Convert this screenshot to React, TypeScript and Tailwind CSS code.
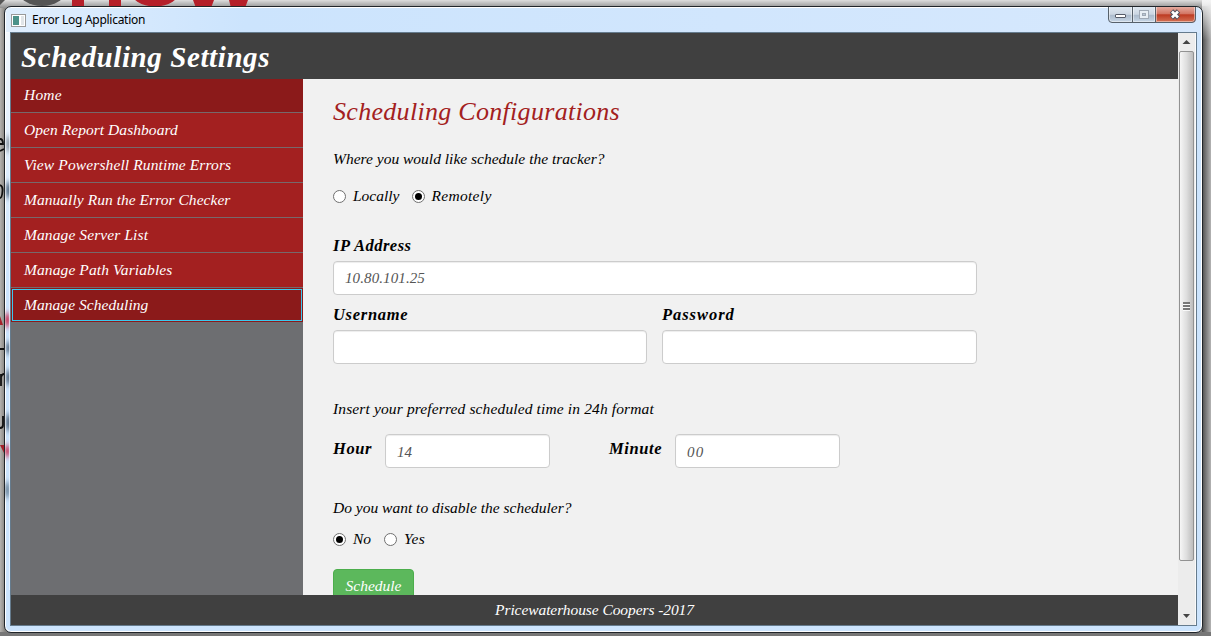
import React from "react";

const NAV: { text: string; tracking: string }[] = [
  { text: "Home", tracking: "tracking-[0.2px]" },
  { text: "Open Report Dashboard", tracking: "tracking-[0.05px]" },
  { text: "View Powershell Runtime Errors", tracking: "tracking-[0.12px]" },
  { text: "Manually Run the Error Checker", tracking: "tracking-[0.04px]" },
  { text: "Manage Server List", tracking: "tracking-[0.1px]" },
  { text: "Manage Path Variables", tracking: "tracking-[0.1px]" },
  { text: "Manage Scheduling", tracking: "tracking-[0.05px]" },
];

function Radio({ label, on = false, tracking = "" }: { label: string; on?: boolean; tracking?: string }) {
  return (
    <label className="flex h-5 items-center">
      <span className="flex size-[13px] shrink-0 items-center justify-center rounded-full border border-[#707070] bg-white">
        {on && <span className="size-[7px] rounded-full bg-black" />}
      </span>
      <span className={"ml-[7px] whitespace-nowrap " + tracking}>{label}</span>
    </label>
  );
}

function Field({ value = "", className = "" }: { value?: string; className?: string }) {
  return (
    <div className={"flex h-[34px] items-center rounded border border-[#ccc] bg-white pl-[11px] text-[15px] text-[#555] shadow-[inset_0_1px_1px_rgba(0,0,0,0.075)] " + className}>
      {value}
    </div>
  );
}

function Backdrop() {
  return (
    <svg className="absolute inset-0" width="1211" height="636" viewBox="0 0 1211 636">
      <defs>
        <linearGradient id="rightShade">
          <stop offset="0" stopColor="#4c4c4c" />
          <stop offset="1" stopColor="#b4b4b4" />
        </linearGradient>
        <linearGradient id="topShade" x2="0" y2="1">
          <stop offset="0" stopColor="#dedede" />
          <stop offset="1" stopColor="#8e8e8e" />
        </linearGradient>
        <linearGradient id="cornerShade" x2="0" y2="1">
          <stop offset="0" stopColor="#f4f4f4" />
          <stop offset="1" stopColor="#f4f4f4" stopOpacity="0" />
        </linearGradient>
        <linearGradient id="leftShade" gradientUnits="userSpaceOnUse" x1="0" x2="5" y1="0" y2="0">
          <stop offset="0" stopColor="#b5b3b0" />
          <stop offset="1" stopColor="#85837f" />
        </linearGradient>
      </defs>
      <rect width="1211" height="636" fill="url(#leftShade)" />
      <rect width="1211" height="8" fill="url(#topShade)" />
      <rect x="1202" y="6" width="9" height="630" fill="url(#rightShade)" />
      <rect x="1202" width="9" height="40" fill="url(#cornerShade)" />
      <rect y="632" width="1211" height="4" fill="#777" />
      <path d="M0 0h5L0 5z" fill="#555" />
      <ellipse cx="42" cy="-10" rx="24" ry="16" fill="#555" />
      <path d="M72 0h12v8h-12zM109 0h12v8h-12z" fill="#b5202a" />
      <ellipse cx="155" cy="-10" rx="25" ry="16.500" fill="#b5202a" />
      <path d="M193 0h21l-3 8h-15zM229 0h19l-3 8h-14z" fill="#b5202a" />
      <g fill="none" stroke="#111" strokeWidth="1.800">
        <path d="M0 139Q3 139 3 144H0M0 151L4 149" />
        <path d="M0 185Q3 186 2.500 191Q2 198 0 198" />
        <path d="M0 349H4M1 374V386M1 377Q2 374 4 374M0 428Q3 428 3 425V416" />
      </g>
      <path d="M0 316l3 9H0zM0 445h4v8z" fill="#a4202a" />
    </svg>
  );
}

function FrameReflections() {
  return (
    <svg className="absolute top-[30px] left-[5px]" width="5" height="560" viewBox="0 30 5 560">
      <defs>
        <filter id="soft" x="-100%" y="-50%" width="300%" height="200%">
          <feGaussianBlur stdDeviation="1.2 3" />
        </filter>
        <linearGradient id="frameGlow" x2="0" y2="1">
          <stop offset="0" stopColor="#fff" stopOpacity=".75" />
          <stop offset="1" stopColor="#fff" stopOpacity="0" />
        </linearGradient>
      </defs>
      <rect y="32" width="5" height="260" fill="url(#frameGlow)" />
      <g filter="url(#soft)">
        <path d="M1 137h5v14h-5z" fill="#9aa5b0" />
        <path d="M1 183h5v14h-5zM1 343h5v10h-5zM1 371h5v13h-5zM1 415h5v15h-5z" fill="#64788f" />
        <path d="M0 483h5v14h-5z" fill="#7f97ad" />
        <path d="M0 314h5v12h-5zM0 446h5v10h-5z" fill="#c9476b" />
      </g>
      <path d="M4.500 32v558" stroke="#eef6ff" strokeOpacity=".7" />
    </svg>
  );
}

function WindowButtons() {
  return (
    <svg width="88" height="16" viewBox="0 0 88 16">
      <defs>
        <linearGradient id="btn" x2="0" y2="1">
          <stop offset="0" stopColor="#dfe8f1" />
          <stop offset=".48" stopColor="#cbd6e2" />
          <stop offset=".5" stopColor="#aab9ca" />
          <stop offset="1" stopColor="#c8d8e8" />
        </linearGradient>
        <linearGradient id="close" x2="0" y2="1">
          <stop offset="0" stopColor="#e5aa9e" />
          <stop offset=".45" stopColor="#d27462" />
          <stop offset=".5" stopColor="#bd3a22" />
          <stop offset="1" stopColor="#d57558" />
        </linearGradient>
      </defs>
      <path d="M.5 0V12Q.5 15.500 4 15.500H48V0z" fill="url(#btn)" />
      <path d="M48 0V15.500H84Q87.500 15.500 87.500 12V0z" fill="url(#close)" />
      <path d="M1.500 0V12Q1.500 14.500 4 14.500H23.500V0M25.500 0V14.500H46.500V0M48.500 0V14.500H84Q86.500 14.500 86.500 12V0" fill="none" stroke="#fff" strokeOpacity=".45" />
      <path d="M.5 0V12Q.5 15.500 4 15.500H84Q87.500 15.500 87.500 12V0M24.500 0V15M47.500 0V15" fill="none" stroke="#57616b" />
      <rect x="7.500" y="7.500" width="10" height="3" rx=".5" fill="#fff" stroke="#555b68" />
      <rect x="31.500" y="3.500" width="9" height="8" fill="#e8eef4" stroke="#a0a9b5" />
      <rect x="34.500" y="6.500" width="3" height="2" fill="#bac6d4" stroke="#a0a9b5" />
      <path d="M63.500 4L70.500 11M70.500 4L63.500 11" stroke="#51505c" strokeWidth="4.800" />
      <path d="M64 4.500L70 10.500M70 4.500L64 10.500" stroke="#fff" strokeWidth="2.600" />
    </svg>
  );
}

function Scrollbar() {
  return (
    <div className="flex w-[18px] flex-col items-center border-r border-[#fafafa] bg-[#ececec]">
      <svg width="17" height="18" viewBox="0 0 17 18">
        <path d="M4.500 11L8.500 7L12.500 11z" fill="#444" />
      </svg>
      <div className="flex h-[510px] w-[15px] items-center justify-center rounded-[2px] border border-[#929292] bg-linear-to-r from-[#f6f6f6] via-[#dedede] to-[#bdbdbd]">
        <svg width="8" height="9" viewBox="0 0 8 9">
          <path d="M0 1h7M0 4h7M0 7h7" stroke="#555" strokeWidth="1.500" />
          <path d="M0 2.500h7M0 5.500h7M0 8.500h7" stroke="#fff" strokeWidth=".8" />
        </svg>
      </div>
      <svg className="mt-auto" width="17" height="18" viewBox="0 0 17 18">
        <path d="M5 7L12 7L8.500 11z" fill="#444" />
      </svg>
    </div>
  );
}

export default function App() {
  return (
    <div className="relative h-[636px] w-[1211px] overflow-hidden font-['Liberation_Serif',serif] text-[15.5px] leading-5 text-black italic">
      <Backdrop />
      <div className="relative pt-[6px] pl-[4px]">
        <div className="h-[627px] w-[1199px] rounded-[7px] border border-[#20252a] bg-[#cce4fd] px-[5px] pb-[5px] shadow-[inset_0_0_0_1px_#fff]">
          <div className="mx-[-4px] mt-px mb-[-1px] flex h-[25px] items-start justify-between rounded-t-[5px] bg-linear-to-r from-[#e0eefd] via-[#cce4fd] via-20% to-[#d6e8fd] px-[4px]">
            <div className="flex items-center gap-[6px] pt-[3px] pl-[1px]">
              <svg width="15" height="13" viewBox="0 0 15 13">
                <rect x=".5" y=".5" width="14" height="12" fill="#fff" stroke="#999" />
                <rect x="2" y="2" width="6" height="9" fill="#4c9289" />
                <rect x="10" y="2" width="3" height="9" fill="#e1e5e8" />
              </svg>
              <span className="font-['Noto_Sans',sans-serif] text-[12px] leading-[18px] tracking-[-0.28px] not-italic">Error Log Application</span>
            </div>
            <div className="-mt-px mr-[1px]">
              <WindowButtons />
            </div>
          </div>
          <div className="flex h-[594px] border border-[#657b8d] bg-[#404040]">
            <div className="flex w-[1167px] shrink-0 flex-col overflow-hidden">
              <header className="h-[46px] shrink-0 bg-[#404040] pt-[9px] pl-[10px] text-[29px] leading-[30px] font-bold tracking-[0.6px] text-white">
                Scheduling Settings
              </header>
              <div className="flex h-[516px] shrink-0 overflow-hidden bg-[#f1f1f1]">
                <nav className="w-[292px] shrink-0 bg-[#6d6e71] text-white">
                  {NAV.map(({ text, tracking }, i) => {
                    const last = i === NAV.length - 1;
                    const look = last
                      ? "h-[34px] border border-[#8b1a1a] bg-[#8b1a1a]"
                      : i === 0
                        ? "h-[34px] border-b border-[#77686b] bg-[#8b1a1a] pb-[2px] pl-[13px]"
                        : "h-[35px] border-b border-[#77686b] bg-[#a32020] pl-[13px]";
                    return (
                      <div key={text} className={"flex items-center " + look}>
                        {last ? (
                          <div className="flex h-full w-full items-center border border-[#3cc8ee] pl-[11px]">
                            <span className={tracking}>{text}</span>
                          </div>
                        ) : (
                          <span className={tracking}>{text}</span>
                        )}
                      </div>
                    );
                  })}
                </nav>
                <main className="grow pl-[30px]">
                  <h1 className="pt-[17px] text-[26px] leading-8 tracking-[0.3px] text-[#a32020]">Scheduling Configurations</h1>
                  <p className="mt-[21px]">Where you would like schedule the tracker?</p>
                  <div className="mt-[17px] flex gap-[12px]">
                    <Radio label="Locally" />
                    <Radio label="Remotely" on tracking="tracking-[0.3px]" />
                  </div>
                  <p className="mt-[30px] text-[16.5px] font-bold tracking-[0.5px]">IP Address</p>
                  <Field value="10.80.101.25" className="mt-[5px] w-[644px] tracking-[0.1px]" />
                  <div className="mt-[10px] flex gap-[15px]">
                    <div className="w-[314px]">
                      <p className="text-[16.5px] font-bold tracking-[0.7px]">Username</p>
                      <Field className="mt-[5px]" />
                    </div>
                    <div className="w-[315px]">
                      <p className="text-[16.5px] font-bold tracking-[0.95px]">Password</p>
                      <Field className="mt-[5px]" />
                    </div>
                  </div>
                  <p className="mt-[35px] tracking-[0.13px]">Insert your preferred scheduled time in 24h format</p>
                  <div className="mt-[15px] flex">
                    <p className="w-[52px] pt-[5px] text-[16.5px] font-bold tracking-[0.6px]">Hour</p>
                    <Field value="14" className="w-[165px] pt-[2px]" />
                    <p className="ml-[59px] w-[66px] pt-[5px] text-[16.5px] font-bold tracking-[0.6px]">Minute</p>
                    <Field value="00" className="w-[165px] pt-[2px] tracking-[1.2px]" />
                  </div>
                  <p className="mt-[30px]">Do you want to disable the scheduler?</p>
                  <div className="mt-[11px] flex gap-[13px]">
                    <Radio label="No" on />
                    <Radio label="Yes" tracking="tracking-[0.3px]" />
                  </div>
                  <button className="mt-[20px] block h-[34px] w-[81px] rounded border border-[#4cae4c] bg-[#5cb85c] text-white italic">Schedule</button>
                </main>
              </div>
              <footer className="h-[30px] shrink-0 pt-[5px] text-center tracking-[-0.08px] text-white">Pricewaterhouse Coopers -2017</footer>
            </div>
            <Scrollbar />
          </div>
        </div>
      </div>
      <FrameReflections />
    </div>
  );
}
